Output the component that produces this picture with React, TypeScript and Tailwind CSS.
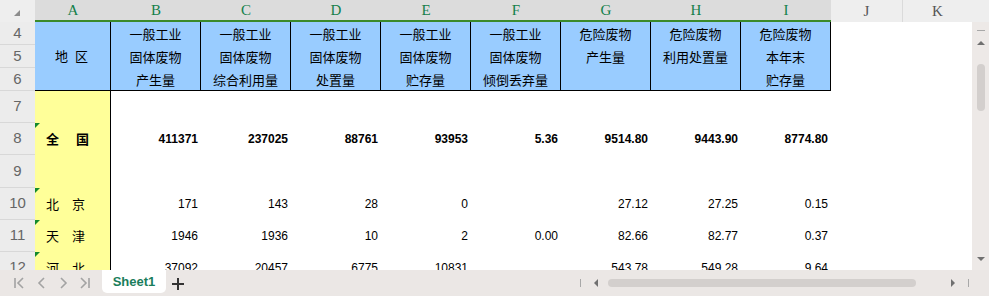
import React from "react";

const cols = ["B", "C", "D", "E", "F", "G", "H", "I"];

const headers: string[][] = [
  ["一般工业", "固体废物", "产生量"],
  ["一般工业", "固体废物", "综合利用量"],
  ["一般工业", "固体废物", "处置量"],
  ["一般工业", "固体废物", "贮存量"],
  ["一般工业", "固体废物", "倾倒丢弃量"],
  ["危险废物", "产生量"],
  ["危险废物", "利用处置量"],
  ["危险废物", "本年末", "贮存量"],
];

interface Row {
  num: number;
  h: string;
  name?: string;
  bold?: boolean;
  flag?: boolean;
  values?: string[];
}

const rows: Row[] = [
  { num: 7, h: "h-[32px]" },
  {
    num: 8,
    h: "h-[32px]",
    name: "全　国",
    bold: true,
    flag: true,
    values: ["411371", "237025", "88761", "93953", "5.36", "9514.80", "9443.90", "8774.80"],
  },
  { num: 9, h: "h-[33px]" },
  {
    num: 10,
    h: "h-[32px]",
    name: "北　京",
    flag: true,
    values: ["171", "143", "28", "0", "", "27.12", "27.25", "0.15"],
  },
  {
    num: 11,
    h: "h-[32px]",
    name: "天　津",
    flag: true,
    values: ["1946", "1936", "10", "2", "0.00", "82.66", "82.77", "0.37"],
  },
  {
    num: 12,
    h: "h-[32px]",
    name: "河　北",
    flag: true,
    values: ["37092", "20457", "6775", "10831", "", "543.78", "549.28", "9.64"],
  },
];

const cjk = "font-['Noto_Sans_CJK_SC',sans-serif]";
const arial = "font-['Liberation_Sans',Arial,sans-serif]";
const letter = "font-['Liberation_Serif',serif] text-[15px]";

function RowNum({ n, h }: { n: number; h: string }) {
  return (
    <div
      className={`${h} shrink-0 flex items-center justify-center border-b border-[#d8d8d8] text-[15px] font-light text-[#666] ${arial}`}
    >
      {n}
    </div>
  );
}

function NavIcons() {
  return (
    <svg width="100" height="26" viewBox="0 0 100 26" className="shrink-0">
      <g fill="none" stroke="#a3a3a3" strokeWidth="1.6">
        <path d="M15 8v10" />
        <path d="M23 8l-5 5 5 5" />
        <path d="M44 8l-5 5 5 5" />
        <path d="M61 8l5 5-5 5" />
        <path d="M81 8l5 5-5 5" />
        <path d="M89 8v10" />
      </g>
    </svg>
  );
}

export default function App() {
  return (
    <div className="w-[989px] h-[296px] overflow-hidden bg-white flex flex-col select-none">
      {/* column headers */}
      <div className="h-[22px] flex shrink-0 bg-[#eeeeee]">
        <div className="w-[35px] relative">
          <div className="absolute left-[14px] top-[10px] w-0 h-0 border-b-[6px] border-l-[6px] border-l-transparent border-b-[#8c8c8c]" />
        </div>
        {["A", ...cols].map((c) => (
          <div
            key={c}
            className={`${c === "A" ? "w-[76px]" : "w-[90px]"} bg-[#dcdcdc] border-b-2 border-[#3b8a2a] flex items-center justify-center text-[#13804a] ${letter}`}
          >
            {c}
          </div>
        ))}
        <div className={`w-[72px] border-r border-[#dadada] flex items-center justify-center text-[#555] ${letter}`}>
          J
        </div>
        <div className={`w-[69px] flex items-center justify-center text-[#555] ${letter}`}>K</div>
        <div className="flex-1" />
      </div>

      {/* body */}
      <div className="flex-1 flex min-h-0">
        <div className="w-[972px] flex overflow-hidden">
          <div className="w-[35px] shrink-0 bg-[#ececec] flex flex-col">
            <RowNum n={4} h="h-[23px]" />
            <RowNum n={5} h="h-[23px]" />
            <RowNum n={6} h="h-[23px]" />
            {rows.map((r) => (
              <RowNum key={r.num} n={r.num} h={r.h} />
            ))}
          </div>

          <div className="flex-1 flex flex-col">
            <div className="flex h-[69px] shrink-0">
              <div
                className={`w-[76px] bg-[#99ccff] border-r border-b border-black flex items-center justify-center text-[13px] tracking-[2px] text-black ${cjk}`}
              >
                地 区
              </div>
              {headers.map((lines, i) => (
                <div
                  key={i}
                  className={`w-[90px] bg-[#99ccff] border-r border-b border-black flex flex-col items-center text-[13px] leading-[23px] text-black ${cjk}`}
                >
                  {lines.map((l) => (
                    <span key={l}>{l}</span>
                  ))}
                </div>
              ))}
            </div>

            {rows.map((r) => (
              <div key={r.num} className={`flex shrink-0 ${r.h}`}>
                <div
                  className={`w-[76px] relative bg-[#ffff99] border-r border-black flex items-center pl-[11px] text-[13px] text-black ${cjk} ${r.bold ? "font-bold tracking-[2px]" : ""}`}
                >
                  {r.flag && (
                    <div className="absolute left-0 top-0 w-0 h-0 border-t-[5px] border-r-[5px] border-t-[#13892b] border-r-transparent" />
                  )}
                  {r.name}
                </div>
                {cols.map((c, i) => (
                  <div
                    key={c}
                    className={`w-[90px] flex items-center justify-end pr-[3px] text-[12px] text-black ${arial} ${r.bold ? "font-bold" : ""}`}
                  >
                    {r.values ? r.values[i] : ""}
                  </div>
                ))}
              </div>
            ))}
          </div>
        </div>

        {/* vertical scrollbar */}
        <div className="w-[17px] bg-[#ede9e7] flex flex-col items-center">
          <div className="mt-[8px] w-[8px] h-px bg-[#a8a8a8]" />
          <div className="mt-[10px] w-0 h-0 border-l-[4px] border-r-[4px] border-b-[4px] border-l-transparent border-r-transparent border-b-[#707070]" />
          <div className="mt-[19px] w-[8px] h-[47px] rounded-full bg-[#d3cfcd]" />
          <div className="flex-1" />
          <div className="mb-[9px] w-0 h-0 border-l-[4px] border-r-[4px] border-t-[4px] border-l-transparent border-r-transparent border-t-[#707070]" />
        </div>
      </div>

      {/* sheet tabs bar */}
      <div className="h-[26px] shrink-0 bg-[#ebe7e5] flex items-start">
        <NavIcons />
        <div
          className={`ml-[2px] w-[64px] h-[23px] bg-white rounded-b-[5px] flex items-center justify-center text-[13px] font-bold text-[#1a7d5b] ${arial}`}
        >
          Sheet1
        </div>
        <svg width="12" height="12" viewBox="0 0 12 12" className="ml-[6px] mt-[8px] shrink-0">
          <path d="M5 0h2v12H5z M0 5h12v2H0z" fill="#333" />
        </svg>
        <div className="flex-1" />
        <div className="flex items-center h-[26px] pr-[20px]">
          <div className="w-px h-[8px] bg-[#a8a8a8]" />
          <div className="ml-[13px] w-0 h-0 border-t-[4px] border-b-[4px] border-r-[4px] border-t-transparent border-b-transparent border-r-[#707070]" />
          <div className="ml-[10px] w-[308px] h-[8px] rounded-full bg-[#d3cfcd]" />
          <div className="ml-[35px] w-0 h-0 border-t-[4px] border-b-[4px] border-l-[4px] border-t-transparent border-b-transparent border-l-[#707070]" />
          <div className="ml-[13px] w-px h-[8px] bg-[#a8a8a8]" />
        </div>
      </div>
    </div>
  );
}
